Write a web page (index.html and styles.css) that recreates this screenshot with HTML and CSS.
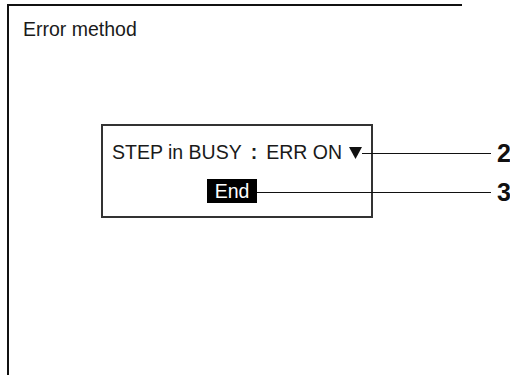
FILE: index.html
```html
<!DOCTYPE html>
<html lang="en">
<head>
    <meta charset="UTF-8">
    <title>Error method</title>
    <link rel="stylesheet" href="styles.css">
</head>
<body>
    <div class="frame">
        <div class="title">Error method</div>

        <div class="panel">
            <div class="step-row">
                <span>STEP in BUSY</span>
                <span class="colon">:</span>
                <span>ERR ON</span>
                <svg class="arrow" width="13" height="12" viewBox="0 0 13 12"><polygon points="0,0 13,0 6.5,12" fill="#111"/></svg>
            </div>
            <div class="end-btn">End</div>
        </div>
    </div>

    <!-- callout labels -->
    <div class="callout c2"><span class="line"></span><span class="num">2</span></div>
    <div class="callout c3"><span class="line"></span><span class="num">3</span></div>
</body>
</html>
```

FILE: styles.css
```css
body { margin: 0; font-family: "Liberation Sans", Arial, sans-serif; color: #1a1a1a; background: #fff; }
.frame { margin: 4px 0 0 7px; width: 455px; height: 371px; box-sizing: border-box; border-top: 2px solid #111; border-left: 2px solid #111; padding: 12px 0 0 14px; }
.title { font-size: 19.5px; line-height: 22px; }
.panel { margin: 84px 0 0 78px; width: 272px; height: 94px; box-sizing: border-box; border: 2px solid #333; padding: 15px 0 0 9px; }
.step-row { display: flex; align-items: center; font-size: 19.5px; line-height: 22px; white-space: nowrap; }
.colon { font-weight: bold; margin: 0 9px 0 9px; }
.step-row span:nth-child(3) { margin-right: 7px; }
.arrow { display: block; margin-top: 1px; }
.end-btn { margin: 16px 0 0 95px; width: 50px; height: 24px; line-height: 24px; background: #000; color: #fff; font-size: 19.5px; text-align: center; }
.callout { position: absolute; display: flex; align-items: center; height: 24px; }
.callout .line { height: 1px; background: #111; }
.callout .num { font-size: 25px; font-weight: bold; margin-left: 6px; color: #111; }
.c2 { left: 362px; top: 141px; }
.c2 .line { width: 129px; }
.c3 { left: 257px; top: 180px; }
.c3 .line { width: 234px; }
```
